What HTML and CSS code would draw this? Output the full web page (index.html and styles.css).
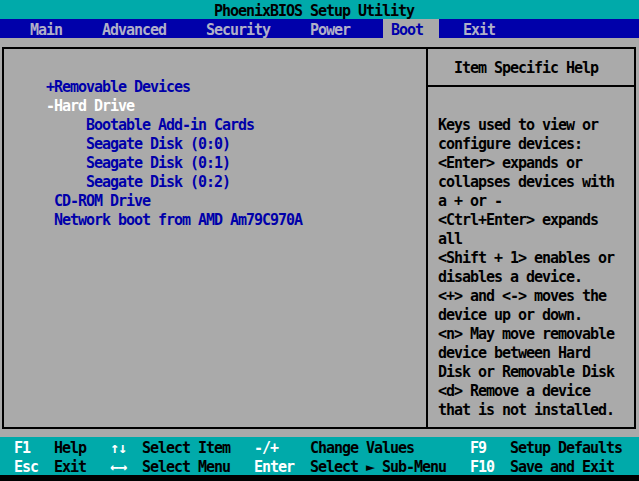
FILE: index.html
```html
<!DOCTYPE html>
<html lang="en">
<head>
    <meta charset="UTF-8">
    <title>PhoenixBIOS Setup Utility</title>
    <link rel="stylesheet" href="styles.css">
</head>
<body>
    <div class="screen">
        <div class="title">PhoenixBIOS Setup Utility</div>
        <div class="menubar">   Main     Advanced     Security     Power    <span class="tab-active"> Boot  </span>   Exit</div>

        <div class="body">
            <div class="frame">
                <div class="boot-list">
                    <div class="item">+Removable Devices</div>
                    <div class="item open">-Hard Drive</div>
                    <div class="item sub">Bootable Add-in Cards</div>
                    <div class="item sub">Seagate Disk (0:0)</div>
                    <div class="item sub">Seagate Disk (0:1)</div>
                    <div class="item sub">Seagate Disk (0:2)</div>
                    <div class="item plain">CD-ROM Drive</div>
                    <div class="item plain">Network boot from AMD Am79C970A</div>
                </div>

                <div class="help">
                    <div class="help-title">Item Specific Help</div>
                    <div class="help-text">Keys used to view or
configure devices:
&lt;Enter&gt; expands or
collapses devices with
a + or -
&lt;Ctrl+Enter&gt; expands
all
&lt;Shift + 1&gt; enables or
disables a device.
&lt;+&gt; and &lt;-&gt; moves the
device up or down.
&lt;n&gt; May move removable
device between Hard
Disk or Removable Disk
&lt;d&gt; Remove a device
that is not installed.</div>
                </div>
            </div>
        </div>

        <div class="keys">
            <span class="key">F1</span><span class="desc">Help</span>
            <span class="key">↑↓</span><span class="desc">Select Item</span>
            <span class="key">-/+</span><span class="desc">Change Values</span>
            <span class="key">F9</span><span class="desc">Setup Defaults</span>
            <span class="key">Esc</span><span class="desc">Exit</span>
            <span class="key">←→</span><span class="desc">Select Menu</span>
            <span class="key">Enter</span><span class="desc">Select ► Sub-Menu</span>
            <span class="key">F10</span><span class="desc">Save and Exit</span>
        </div>
    </div>
</body>
</html>
```

FILE: styles.css
```css
* {
    margin: 0;
    padding: 0;
    box-sizing: border-box;
}

body {
    background-color: #000;
    width: 639px;
    height: 481px;
    overflow: hidden;
    font-family: "DejaVu Sans Mono", monospace;
    font-size: 15px;
    font-weight: bold;
    letter-spacing: -1.03px;
    line-height: 19px;
}

.screen {
    width: 640px;
    height: 475px;
    background-color: #aaaaaa;
    display: flex;
    flex-direction: column;
}

.title {
    height: 19px;
    padding: 4px 0 0 214px;
    line-height: 15px;
    background-color: #00aaaa;
    color: #000;
}

.menubar {
    height: 19px;
    padding: 4px 0 0 6px;
    line-height: 15px;
    background-color: #0000aa;
    color: #b0b0c8;
    white-space: pre;
}

.tab-active {
    display: inline-block;
    vertical-align: top;
    height: 19px;
    margin: -4px 0 0 1px;
    padding-top: 4px;
    line-height: 15px;
    background-color: #aaaaaa;
    color: #0000aa;
}

.body {
    flex: 1;
    min-height: 0;
    padding: 9px 4px 8px 2px;
}

.frame {
    height: 100%;
    border: 2px solid #000;
    display: grid;
    grid-template-columns: 422px 1fr;
}

.boot-list {
    padding: 29px 0 0 42px;
    color: #0000aa;
}

.item {
    height: 19px;
    white-space: pre;
}

.item.open {
    color: #fff;
}

.item.sub {
    padding-left: 40px;
}

.item.plain {
    padding-left: 8px;
}

.help {
    border-left: 2px solid #000;
    color: #000;
}

.help-title {
    height: 38px;
    padding: 10px 0 0 26px;
    border-bottom: 2px solid #000;
}

.help-text {
    padding: 29px 0 0 10px;
    white-space: pre;
}

.keys {
    flex-shrink: 0;
    height: 38px;
    padding: 2px 0 0 14px;
    background-color: #00aaaa;
    display: grid;
    grid-template-columns: 40px 56px 32px 112px 56px 160px 40px 1fr;
    grid-template-rows: 19px 17px;
}

.key,
.desc {
    white-space: pre;
}

.key {
    color: #fff;
}

.desc {
    color: #000;
}
```
